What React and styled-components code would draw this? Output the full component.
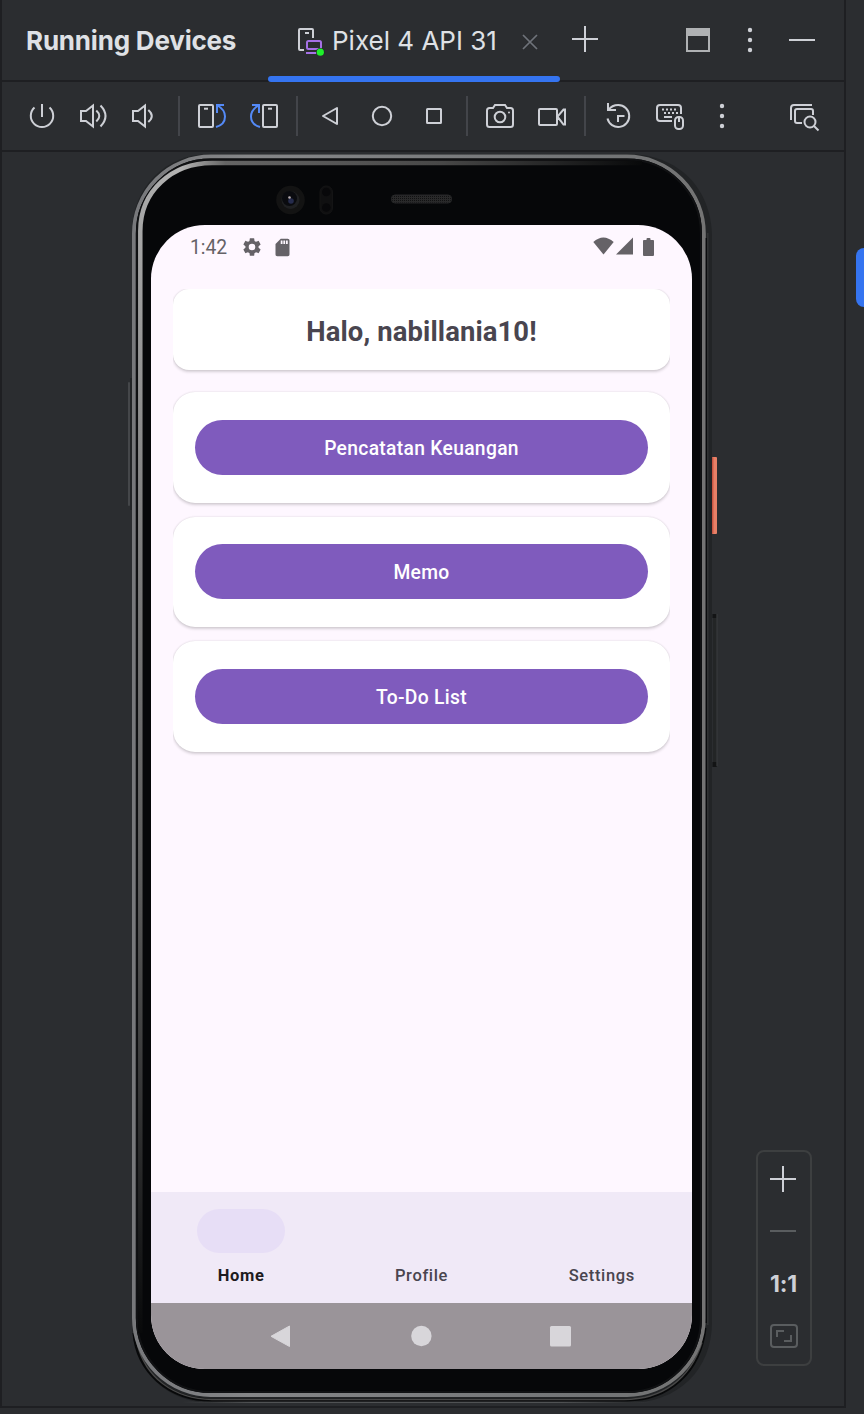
import React from "react";
import styled, { createGlobalStyle } from "styled-components";

const GlobalStyle = createGlobalStyle`
  * { box-sizing: border-box; }
  body { margin: 0; background: #2b2d30; }
`;

const Window = styled.div`
  display: flex;
  width: 864px;
  height: 1414px;
  background: #2b2d30;
  font-family: Inter, "Liberation Sans", sans-serif;
  color: #dfe1e5;
  overflow: hidden;
`;

const ToolWindow = styled.main`
  display: flex;
  flex-direction: column;
  width: 846px;
  height: 1408px;
  border: solid #1e1f22;
  border-width: 0 2px 2px;
`;

const SideStripe = styled.aside`
  display: flex;
  justify-content: flex-end;
  width: 18px;
  padding-top: 248px;
`;

const StripeTab = styled.div`
  width: 8px;
  height: 59px;
  border-radius: 8px 0 0 8px;
  background: #3574f0;
`;

const Header = styled.header`
  display: flex;
  align-items: center;
  height: 82px;
  flex: none;
  padding-left: 24px;
  border-bottom: 2px solid #1e1f22;
`;

const Title = styled.h1`
  margin: 0;
  width: 242px;
  font-size: 26px;
  font-weight: 700;
  letter-spacing: -0.2px;
  white-space: nowrap;
`;

const Tab = styled.div`
  position: relative;
  display: flex;
  align-items: center;
  width: 292px;
  height: 80px;
  padding-left: 26px;
  font-size: 26px;
  white-space: nowrap;

  &::after {
    content: "";
    position: absolute;
    left: 0;
    right: 0;
    bottom: -2px;
    height: 6px;
    border-radius: 3px;
    background: #3574f0;
  }
`;

const TabLabel = styled.span`
  width: 182px;
  margin-left: 6px;
`;

const HeaderActions = styled.div`
  display: flex;
  flex: 1;
  align-items: center;
  padding: 0 16px 0 0;
`;

const Toolbar = styled.div`
  display: flex;
  align-items: center;
  height: 70px;
  flex: none;
  padding: 0 14px;
  border-bottom: 2px solid #1e1f22;
`;

const Cell = styled.div`
  display: flex;
  align-items: center;
  justify-content: center;
  width: 52px;
  height: 52px;
  flex: none;
  color: ${(p) => (p.$dim ? "#5a5d5f" : "#ced0d6")};
`;

const Separator = styled.div`
  width: 2px;
  height: 40px;
  margin: 0 6px;
  background: #43454a;
`;

const Spacer = styled.div`
  flex: 1;
`;

const DeviceArea = styled.section`
  display: flex;
  flex: 1;
  padding: 1px 32px 0 130px;
`;

const Phone = styled.div`
  position: relative;
  display: flex;
  flex-direction: column;
  width: 580px;
  height: 1251px;
  padding: 0 20px 0 19px;
`;

const Bezel = styled.svg`
  position: absolute;
  inset: 0;
  overflow: visible;
`;

const Forehead = styled.div`
  position: relative;
  display: flex;
  height: 72px;
  padding: 29px 0 0 123px;
`;

const SensorArt = styled.svg`
  display: block;
`;

const Screen = styled.div`
  position: relative;
  display: flex;
  flex-direction: column;
  height: 1144px;
  border-radius: 54px;
  overflow: hidden;
  background: #fef7ff;
  font-family: Roboto, "Noto Sans", sans-serif;
`;

const StatusBar = styled.div`
  display: flex;
  align-items: center;
  height: 44px;
  padding: 0 38px 0 39px;
  color: #656267;
  font-size: 19.3px;
`;

const Clock = styled.span`
  width: 51px;
  padding-top: 1px;
`;

const StatusIcon = styled.svg`
  flex: none;
  margin: ${(p) => p.$margin || 0};
`;

const Content = styled.div`
  display: flex;
  flex-direction: column;
  flex: 1;
  margin: 20px 22px 0;
  overflow: hidden;
`;

const Card = styled.div`
  flex: none;
  background: #fff;
  box-shadow: 0 1.5px 3px rgba(0, 0, 0, 0.16), 0 0 2px rgba(0, 0, 0, 0.1);
`;

const GreetingCard = styled(Card)`
  height: 81px;
  margin-bottom: 22px;
  border-radius: 16px;
  color: #49454f;
  font-size: 27.4px;
  font-weight: 700;
  letter-spacing: 0.12px;
  line-height: 86px;
  text-align: center;
`;

const MenuCard = styled(Card)`
  height: 110.5px;
  margin-bottom: 14px;
  padding: 27.7px 22px;
  border-radius: 22px;
`;

const MenuButton = styled.button`
  display: block;
  width: 100%;
  height: 55px;
  padding: 0;
  border: 0;
  border-radius: 28px;
  background: #7f5bbd;
  color: #fff;
  font: 500 19.3px/57px Roboto, sans-serif;
  letter-spacing: 0.3px;
`;

const BottomNav = styled.nav`
  display: grid;
  grid-template-columns: repeat(3, 1fr);
  height: 111px;
  flex: none;
  background: #f0e9f7;
`;

const NavItem = styled.div`
  display: flex;
  flex-direction: column;
  align-items: center;
  padding-top: 17px;
  color: ${(p) => (p.$active ? "#1d1b20" : "#49454f")};
  font-size: 16.5px;
  font-weight: ${(p) => (p.$active ? 700 : 500)};
  letter-spacing: 0.65px;
  line-height: 20px;
`;

const Indicator = styled.div`
  width: 88px;
  height: 44px;
  margin-bottom: 13px;
  border-radius: 22px;
  background: ${(p) => (p.$active ? "#e7def6" : "transparent")};
`;

const SystemNav = styled.div`
  display: flex;
  align-items: center;
  justify-content: space-between;
  height: 66px;
  flex: none;
  padding: 0 118px 0 117px;
  background: #9a9499;
`;

const ZoomPanel = styled.div`
  display: flex;
  flex-direction: column;
  align-items: center;
  align-self: flex-end;
  width: 56px;
  height: 216px;
  margin: 0 0 40px 44px;
  padding-top: 2px;
  border: 2px solid #3d3f40;
  border-radius: 8px;
`;

const Ratio = styled.span`
  padding-right: 1px;
  font-size: 23px;
  font-weight: 700;
  letter-spacing: -0.2px;
`;

const IconSvg = styled.svg`
  flex: none;
`;

const Icon = ({ children }) => (
  <IconSvg width="32" height="32" viewBox="0 0 32 32" fill="none" stroke="currentColor" strokeWidth="2">
    {children}
  </IconSvg>
);

const BLUE = "#548af7";

const Plus = () => <Icon><path d="M2 15h26M15 2v26" /></Icon>;
const Minus = () => <Icon><path d="M3 16h26" /></Icon>;
const Dots = () => (
  <Icon>
    <g fill="currentColor" stroke="none">
      <circle cx="16" cy="6" r="2.2" /><circle cx="16" cy="16" r="2.2" /><circle cx="16" cy="26" r="2.2" />
    </g>
  </Icon>
);
const RotateDevice = ({ right }) => (
  <Icon>
    <rect x={right ? 15 : 3} y="5" width="14" height="22" rx="1" />
    <path d={right ? "M20 8.7h4" : "M8 8.7h4"} />
    <g stroke={BLUE} transform={right ? "translate(32 0) scale(-1 1)" : undefined}>
      <path d="M28 5h-7v8M21.500 5.500C26 8 29 12 29 16.500C29 21.500 25.500 25.500 20 27" />
    </g>
  </Icon>
);

const DeviceIcon = () => (
  <Icon>
    <path d="M10 26H6q-1 0-1-1V6q0-1 1-1h12q1 0 1 1v8M11 9h4" stroke="#ced0d6" />
    <rect x="13" y="17" width="14" height="8" rx="1.500" fill="#2b2d30" stroke="#a571e6" />
    <path d="M12 29h11" stroke="#a571e6" />
    <circle cx="26.300" cy="28.200" r="4.300" fill="#23262a" stroke="none" />
    <circle cx="26.300" cy="28.200" r="3.600" fill="#1ff02b" stroke="none" />
  </Icon>
);

const PhoneBody = () => (
  <Bezel width="580" height="1251" viewBox="0 0 580 1251" fill="none">
    <defs>
      <linearGradient id="edge" x1="0" y1="0" x2="1" y2="0">
        <stop offset="0" stopColor="#77787b" />
        <stop offset="0.2" stopColor="#858688" />
        <stop offset="0.8" stopColor="#727476" />
        <stop offset="1" stopColor="#747474" />
      </linearGradient>
      <linearGradient id="rimTop" gradientUnits="userSpaceOnUse" x1="8" y1="0" x2="510" y2="0">
        <stop offset="0" stopColor="#a6a6a6" />
        <stop offset="0.08" stopColor="#b4b4b4" />
        <stop offset="0.17" stopColor="#656565" />
        <stop offset="0.6" stopColor="#484848" />
        <stop offset="1" stopColor="#08090a" />
      </linearGradient>
      <linearGradient id="rimLeft" gradientUnits="userSpaceOnUse" x1="0" y1="78" x2="0" y2="1180">
        <stop offset="0" stopColor="#a6a6a6" />
        <stop offset="0.25" stopColor="#828282" />
        <stop offset="0.6" stopColor="#5c5c5c" />
        <stop offset="1" stopColor="#08090a" />
      </linearGradient>
      <linearGradient id="chin" gradientUnits="userSpaceOnUse" x1="50" y1="0" x2="520" y2="0">
        <stop offset="0" stopColor="#505254" stopOpacity="0" />
        <stop offset="0.15" stopColor="#505254" />
        <stop offset="0.8" stopColor="#505254" />
        <stop offset="1" stopColor="#505254" stopOpacity="0" />
      </linearGradient>
    </defs>
    <rect x="-4" y="229" width="2" height="124" rx="1" fill="#45474a" />
    <path d="M-1 225v132" stroke="#222426" strokeWidth="2" />
    <rect x="580" y="304" width="5" height="77" rx="1" fill="#e88067" />
    <path d="M580.700 304.500v76" stroke="#c85643" strokeWidth="1.500" />
    <rect x="581" y="461" width="4" height="153" fill="#232526" />
    <path d="M580.500 461h4v4h-4zM580.500 609h4v5h-4z" fill="#131415" />
    <path d="M585 461v152" stroke="#3a3c3e" />
    <path d="M78 1h418c50 0 84 34 84 84v1084c0 48-34 81-84 81H80c-47 0-80-34-80-80V79C0 34 34 1 78 1z" fill="#222426" />
    <rect x="50" y="1248.500" width="470" height="1.500" fill="url(#chin)" />
    <path d="M2 1180c3 38 34 67 78 67h415c42 0 73-28 78-72" stroke="#08090a" strokeWidth="3" />
    <path d="M5 1190c8 34 36 56 75 56.500h412c38 0 66-20 78-57" stroke="#484848" strokeWidth="1.300" />
    <rect x="1.900" y="3.500" width="570" height="1238.500" rx="77" fill="#060709" stroke="url(#edge)" strokeWidth="3.800" />
    <path d="M574.300 85v1085" stroke="#0a0b0c" strokeWidth="1.300" />
    <path d="M575.800 80v1092" stroke="#303233" strokeWidth="1.600" />
    <rect x="4.900" y="6.600" width="564" height="1232.500" rx="74" stroke="#101113" strokeWidth="2" />
    <path d="M8.300 1180V78" stroke="url(#rimLeft)" strokeWidth="4.500" />
    <path d="M8.300 78C8.300 38 40 10 80 10H510" stroke="url(#rimTop)" strokeWidth="4.500" />
  </Bezel>
);

const Sensors = () => (
  <SensorArt width="200" height="36" viewBox="0 0 200 36">
    <defs>
      <pattern id="mesh" width="2" height="2" patternUnits="userSpaceOnUse">
        <rect width="2" height="2" fill="#29292a" /><rect width="1" height="1" fill="#111112" />
      </pattern>
    </defs>
    <circle cx="16.500" cy="18" r="14.300" fill="#131313" />
    <circle cx="16.500" cy="18" r="9" fill="#1f2022" />
    <circle cx="15.500" cy="16.500" r="7.500" fill="#0a0b0f" />
    <circle cx="17" cy="19" r="2.800" fill="#252b4c" />
    <circle cx="15.500" cy="15.500" r="1.300" fill="#b9afb2" />
    <rect x="46" y="4" width="12.500" height="28" rx="6" fill="#101011" stroke="#141415" />
    <circle cx="52.300" cy="10" r="4.300" fill="#08080a" />
    <circle cx="52.300" cy="25.500" r="4.300" fill="#08080a" />
    <rect x="117.500" y="13" width="60" height="8" rx="3.500" fill="url(#mesh)" stroke="#262728" />
  </SensorArt>
);

export default function App() {
  return (
    <>
      <GlobalStyle />
      <Window>
        <ToolWindow>
          <Header>
            <Title>Running Devices</Title>
            <Tab>
              <DeviceIcon />
              <TabLabel>Pixel 4 API 31</TabLabel>
              <Icon>
                <path d="M9 11l14 14M23 11L9 25" stroke="#6f737a" strokeWidth="1.700" />
              </Icon>
            </Tab>
            <HeaderActions>
              <Cell><Plus /></Cell>
              <Spacer />
              <Cell>
                <Icon>
                  <g stroke="#afb1b3"><rect x="5" y="5" width="22" height="22" /><path d="M4 8h24" strokeWidth="8" /></g>
                </Icon>
              </Cell>
              <Cell><Dots /></Cell>
              <Cell><Minus /></Cell>
            </HeaderActions>
          </Header>

          <Toolbar>
            <Cell><Icon><path d="M16 4v13M8.500 7.500A11.200 11.200 0 1 0 23.500 7.500" /></Icon></Cell>
            <Cell>
              <Icon><path d="M3 11h5l7-5.500v21L8 21H3zM18.300 10.500q6 5.500 0 11M22.500 5.500q10 10.500 0 21" /></Icon>
            </Cell>
            <Cell>
              <Icon><path d="M3 11h5l7-5.500v21L8 21H3zM18.300 10q7 6 0 12" /></Icon>
            </Cell>
            <Separator />
            <Cell><RotateDevice /></Cell>
            <Cell><RotateDevice right /></Cell>
            <Separator />
            <Cell><Icon><path d="M9 16L23 8v16z" strokeLinejoin="round" /></Icon></Cell>
            <Cell><Icon><circle cx="16" cy="16" r="9.200" /></Icon></Cell>
            <Cell><Icon><rect x="9" y="9" width="14" height="14" rx=".5" /></Icon></Cell>
            <Separator />
            <Cell>
              <Icon>
                <path d="M3 10.500q0-2.500 2.500-2.500h3.500l2-3h10l2 3h3.500q2.500 0 2.500 2.500V24.500q0 2.500-2.500 2.500h-21Q3 27 3 24.500z" />
                <circle cx="16" cy="17" r="5.300" />
                <circle cx="25" cy="12.500" r="1" fill="currentColor" stroke="none" />
              </Icon>
            </Cell>
            <Cell>
              <Icon><path d="M4 9h16q1 0 1 1v14q0 1-1 1H4q-1 0-1-1V10q0-1 1-1zM21.500 16.700l6-7.200h1.500v15h-1.500z" /></Icon>
            </Cell>
            <Separator />
            <Cell>
              <Icon>
                <path d="M6 3v7h8M6.500 10C8.500 7 12 5 16.300 5a11 11 0 1 1-10.800 13.500M16 22v-6h6.500" />
              </Icon>
            </Cell>
            <Cell>
              <Icon>
                <path d="M18 21H6q-3 0-3-3V8q0-3 3-3h18q3 0 3 3v6M10 17h8" />
                <path d="M8 9.500h16M10 13h14" strokeDasharray="2 2" />
                <rect x="21" y="17" width="8" height="12" rx="3.500" /><path d="M25 17v5" />
              </Icon>
            </Cell>
            <Cell><Dots /></Cell>
            <Spacer />
            <Cell>
              <Icon>
                <path d="M3 20V8q0-3 3-3h18M14 23H9q-2 0-2-2V11q0-2 2-2h14q2 0 2 2v4" />
                <circle cx="22" cy="22" r="5.500" /><path d="M26 26l4.500 4.500" />
              </Icon>
            </Cell>
          </Toolbar>

          <DeviceArea>
            <Phone>
              <PhoneBody />
              <Forehead><Sensors /></Forehead>
              <Screen>
                <StatusBar>
                  <Clock>1:42</Clock>
                  <StatusIcon width="22" height="22" viewBox="0 0 24 24" fill="currentColor">
                    <path d="M19.140 12.940c.04-.3.060-.61.060-.94 0-.32-.02-.64-.07-.94l2.030-1.580a.49.49 0 0 0 .12-.61l-1.920-3.320a.488.488 0 0 0-.59-.22l-2.390.96c-.5-.38-1.030-.7-1.620-.94l-.36-2.540a.484.484 0 0 0-.48-.41h-3.840c-.24 0-.43.17-.47.41l-.36 2.540c-.59.24-1.130.57-1.620.94l-2.390-.96c-.22-.08-.47 0-.59.22L2.740 8.870c-.12.21-.08.47.12.61l2.030 1.580c-.05.3-.09.63-.09.94s.02.64.07.94l-2.030 1.580a.49.49 0 0 0-.12.61l1.920 3.320c.12.22.37.29.59.22l2.390-.96c.5.38 1.030.7 1.620.94l.36 2.540c.05.24.24.41.48.41h3.840c.24 0 .44-.17.47-.41l.36-2.540c.59-.24 1.130-.56 1.620-.94l2.390.96c.22.08.47 0 .59-.22l1.920-3.320c.12-.22.07-.47-.12-.61l-2.010-1.580zM12 15.600A3.600 3.600 0 1 1 12 8.400a3.600 3.600 0 0 1 0 7.200z" />
                  </StatusIcon>
                  <StatusIcon width="21" height="21" viewBox="0 0 24 24" fill="currentColor" $margin="0 0 0 9px">
                    <path d="M18 2h-8L4 8v12c0 1.100.9 2 2 2h12c1.100 0 2-.9 2-2V4c0-1.100-.9-2-2-2zm-6 6h-2V4h2v4zm3 0h-2V4h2v4zm3 0h-2V4h2v4z" />
                  </StatusIcon>
                  <Spacer />
                  <StatusIcon width="21" height="18" viewBox="0 0 21 18" fill="currentColor" $margin="-2px 2px 0 0">
                    <path d="M.3 5Q10.300-4 20.700 5L10.500 17.500z" />
                  </StatusIcon>
                  <StatusIcon width="17" height="18" viewBox="0 0 17 18" fill="currentColor" $margin="-2px 10px 0 0">
                    <path d="M17 .5v17H0z" />
                  </StatusIcon>
                  <StatusIcon width="11" height="18" viewBox="0 0 11 19" preserveAspectRatio="none" fill="currentColor" $margin="-1px 0 0 0">
                    <path d="M3.500 1q0-1 1-1h2q1 0 1 1v1H10q1 0 1 1v15q0 1-1 1H1q-1 0-1-1V3q0-1 1-1h2.500z" />
                  </StatusIcon>
                </StatusBar>
                <Content>
                  <GreetingCard>Halo, nabillania10!</GreetingCard>
                  {["Pencatatan Keuangan", "Memo", "To-Do List"].map((label) => (
                    <MenuCard key={label}>
                      <MenuButton>{label}</MenuButton>
                    </MenuCard>
                  ))}
                </Content>
                <BottomNav>
                  {["Home", "Profile", "Settings"].map((label, i) => (
                    <NavItem key={label} $active={i === 0}>
                      <Indicator $active={i === 0} />
                      {label}
                    </NavItem>
                  ))}
                </BottomNav>
                <SystemNav>
                  <svg width="26" height="26" viewBox="0 0 26 26"><path d="M3 13.300L21.500 3v20.500z" fill="#d8d6da" stroke="#d8d6da" strokeLinejoin="round" /></svg>
                  <svg width="26" height="26" viewBox="0 0 26 26"><circle cx="13.400" cy="13" r="10.200" fill="#d8d6da" /></svg>
                  <svg width="26" height="26" viewBox="0 0 26 26"><rect x="2" y="3" width="21" height="20.500" rx="1.500" fill="#d8d6da" /></svg>
                </SystemNav>
              </Screen>
            </Phone>
            <ZoomPanel>
              <Cell><Plus /></Cell>
              <Cell $dim><Icon><path d="M2 15h26" /></Icon></Cell>
              <Cell><Ratio>1:1</Ratio></Cell>
              <Cell $dim>
                <Icon>
                  <rect x="3" y="5" width="26" height="22" rx="3" />
                  <path d="M9 17v-6h7M16 21h7v-6" />
                </Icon>
              </Cell>
            </ZoomPanel>
          </DeviceArea>
        </ToolWindow>
        <SideStripe><StripeTab /></SideStripe>
      </Window>
    </>
  );
}
